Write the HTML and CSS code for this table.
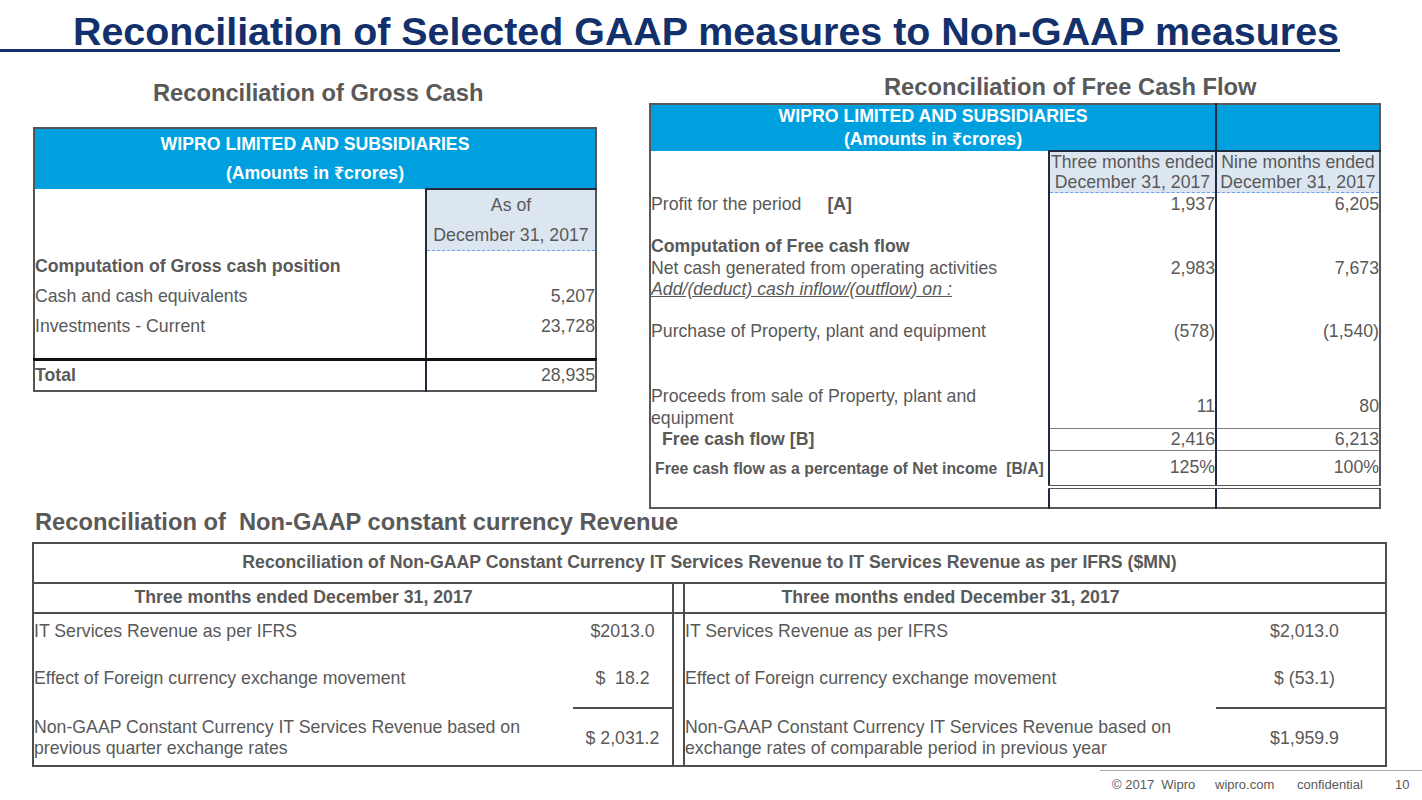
FILE: index.html
```html
<!DOCTYPE html>
<html lang="en">
<head>
<meta charset="utf-8">
<title>Reconciliation of Selected GAAP measures to Non-GAAP measures</title>
<link rel="stylesheet" href="styles.css">
</head>
<body>
<div class="slide">
  <header class="title-bar">
    <h1>Reconciliation of Selected GAAP measures to Non-GAAP measures</h1>
  </header>

  <div class="top-row">
    <section class="col gross">
      <h2 class="sec-head gross-head">Reconciliation of Gross Cash</h2>
      <table class="fin gross-table">
        <colgroup><col class="g-c1"><col class="g-c2"></colgroup>
        <tr class="hd g-hd1"><td colspan="2">WIPRO LIMITED AND SUBSIDIARIES</td></tr>
        <tr class="hd g-hd2"><td colspan="2">(Amounts in ₹crores)</td></tr>
        <tr class="g-colhead"><td></td><td class="v ch">As of<br>December 31, 2017</td></tr>
        <tr class="r31"><td class="b">Computation of Gross cash position</td><td class="v"></td></tr>
        <tr class="r30"><td>Cash and cash equivalents</td><td class="v">5,207</td></tr>
        <tr class="r30"><td>Investments - Current</td><td class="v">23,728</td></tr>
        <tr class="r19"><td></td><td class="v"></td></tr>
        <tr class="r31 total"><td class="b">Total</td><td class="v">28,935</td></tr>
      </table>
    </section>

    <section class="col fcf">
      <h2 class="sec-head fcf-head">Reconciliation of Free Cash Flow</h2>
      <table class="fin fcf-table">
        <colgroup><col class="f-c1"><col class="f-c2"><col class="f-c3"></colgroup>
        <tr class="hd f-hd1"><td colspan="2">WIPRO LIMITED AND SUBSIDIARIES</td><td rowspan="2" class="sep"></td></tr>
        <tr class="hd f-hd2"><td colspan="2">(Amounts in ₹crores)</td></tr>
        <tr class="f-colhead"><td></td><td class="v ch2">Three months ended<br>December 31, 2017</td><td class="v ch2">Nine months ended<br>December 31, 2017</td></tr>
        <tr class="f-r24"><td>Profit for the period<span class="tag">[A]</span></td><td class="v">1,937</td><td class="v">6,205</td></tr>
        <tr class="f-r19"><td></td><td class="v"></td><td class="v"></td></tr>
        <tr class="f-r22"><td class="b">Computation of Free cash flow</td><td class="v"></td><td class="v"></td></tr>
        <tr class="f-r21"><td>Net cash generated from operating activities</td><td class="v">2,983</td><td class="v">7,673</td></tr>
        <tr class="f-r21"><td class="iu">Add/(deduct) cash inflow/(outflow) on :</td><td class="v"></td><td class="v"></td></tr>
        <tr class="f-r19"><td></td><td class="v"></td><td class="v"></td></tr>
        <tr class="f-r26"><td>Purchase of Property, plant and equipment</td><td class="v">(578)</td><td class="v">(1,540)</td></tr>
        <tr class="f-r40"><td></td><td class="v"></td><td class="v"></td></tr>
        <tr class="f-r43"><td class="wrap">Proceeds from sale of Property, plant and<br>equipment</td><td class="v">11</td><td class="v">80</td></tr>
        <tr class="f-r21 fcf-total"><td class="b ind">Free cash flow [B]</td><td class="v">2,416</td><td class="v">6,213</td></tr>
        <tr class="f-r36 pct"><td class="b small">Free cash flow as a percentage of Net income&nbsp; [B/A]</td><td class="v">125%</td><td class="v">100%</td></tr>
        <tr class="f-r21"><td></td><td class="v"></td><td class="v"></td></tr>
      </table>
    </section>
  </div>

  <section class="cc">
    <h2 class="sec-head cc-head">Reconciliation of&nbsp; Non-GAAP constant currency Revenue</h2>
    <table class="cc-table">
      <colgroup><col class="c-l1"><col class="c-v1"><col class="c-sp"><col class="c-l2"><col class="c-v2"></colgroup>
      <tr class="cc-title"><td colspan="5">Reconciliation of Non-GAAP Constant Currency IT Services Revenue to IT Services Revenue as per IFRS ($MN)</td></tr>
      <tr class="cc-hd"><td>Three months ended December 31, 2017</td><td></td><td class="sp"></td><td>Three months ended December 31, 2017</td><td></td></tr>
      <tr class="cc-r1"><td>IT Services Revenue as per IFRS</td><td class="cv">$2013.0</td><td class="sp"></td><td>IT Services Revenue as per IFRS</td><td class="cv cv2">$2,013.0</td></tr>
      <tr class="cc-r2"><td>Effect of Foreign currency exchange movement</td><td class="cv">$&nbsp; 18.2</td><td class="sp"></td><td>Effect of Foreign currency exchange movement</td><td class="cv cv2">$ (53.1)</td></tr>
      <tr class="cc-r3"><td>Non-GAAP Constant Currency IT Services Revenue based on<br>previous quarter exchange rates</td><td class="cv tot">$ 2,031.2</td><td class="sp"></td><td>Non-GAAP Constant Currency IT Services Revenue based on<br>exchange rates of comparable period in previous year</td><td class="cv cv2 tot">$1,959.9</td></tr>
    </table>
  </section>

  <footer class="foot">
    <span>© 2017&nbsp; Wipro</span>
    <span>wipro.com</span>
    <span>confidential</span>
    <span>10</span>
  </footer>
</div>
</body>
</html>
```

FILE: styles.css
```css
* { box-sizing: border-box; }

body {
  margin: 0;
  background: #ffffff;
  font-family: "Liberation Sans", Arial, "Noto Sans", "DejaVu Sans", sans-serif;
  color: #595959;
}

.slide {
  width: 1422px;
  height: 800px;
  overflow: hidden;
}

/* ---------- title ---------- */
.title-bar {
  width: 1340px;
  padding-top: 14px;
  border-bottom: 3px solid #12306b;
}

.title-bar h1 {
  margin: 0;
  padding-left: 73px;
  font-size: 39.4px;
  line-height: 35px;
  font-weight: bold;
  color: #12306b;
  white-space: nowrap;
}

/* ---------- section headings ---------- */
.sec-head {
  margin: 0;
  font-size: 23.7px;
  line-height: 28px;
  font-weight: bold;
  color: #595959;
  white-space: nowrap;
}

.top-row {
  display: flex;
  align-items: flex-start;
}

.gross {
  margin-left: 33px;
  width: 564px;
}

.fcf {
  margin-left: 52px;
  width: 732px;
}

.gross-head {
  margin-top: 27px;
  margin-bottom: 20px;
  padding-left: 120px;
}

.fcf-head {
  margin-top: 21px;
  margin-bottom: 2px;
  padding-left: 235px;
}

/* ---------- generic table ---------- */
table {
  border-collapse: collapse;
  table-layout: fixed;
}

td {
  padding: 0;
  font-size: 17.7px;
  line-height: 21px;
  color: #595959;
  white-space: nowrap;
  vertical-align: middle;
}

.b { font-weight: bold; }

.hd td {
  background: #00a0df;
  color: #ffffff;
  font-weight: bold;
  text-align: center;
}

.v { text-align: right; }

/* ---------- gross cash table ---------- */
.gross-table {
  width: 562px;
  border: 2px solid #555555;
}

.g-c1 { width: 392px; }
.g-c2 { width: 170px; }

.g-hd1 { height: 31px; }
.g-hd2 { height: 30px; }

.g-colhead { height: 59px; }

.gross-table td.v {
  border-left: 2px solid #1d2b3c;
}

.gross-table td.ch {
  background: #dce6f1;
  border-top: 2px solid #1d2b3c;
  border-bottom: 1px dashed #6d9eeb;
  text-align: center;
  line-height: 30px;
}

.r31 { height: 31px; }
.r30 { height: 30px; }
.r19 { height: 18px; }

.total td {
  border-top: 3px solid #111111;
}

/* ---------- free cash flow table ---------- */
.fcf-table {
  width: 730px;
  border: 2px solid #595959;
}

.f-c1 { width: 399px; }
.f-c2 { width: 167px; }
.f-c3 { width: 164px; }

.f-hd1 { height: 24px; }
.f-hd2 { height: 23px; }

.fcf-table td.sep {
  border-left: 2px solid #1d2b3c;
}

.fcf-table td.v {
  border-left: 2px solid #1d2b3c;
}

.f-colhead { height: 40px; }

.fcf-table td.ch2 {
  background: #dce6f1;
  border-top: 2px solid #1d2b3c;
  border-bottom: 1px dashed #6d9eeb;
  text-align: center;
  line-height: 20px;
}

.f-r19 { height: 19px; }
.f-r21 { height: 21px; }
.f-r22 { height: 22px; }
.f-r24 { height: 24px; }
.f-r26 { height: 26px; }
.f-r36 { height: 36px; }
.f-r40 { height: 40px; }
.f-r43 { height: 43px; }

.tag {
  margin-left: 26px;
  font-weight: bold;
}

.iu {
  font-style: italic;
  text-decoration: underline;
}

.wrap { line-height: 22px; }

.ind { padding-left: 11px; }

.small {
  font-size: 15.8px;
  padding-left: 4px;
}

.fcf-total td.v {
  border-top: 1px solid #7f7f7f;
  border-bottom: 1px solid #7f7f7f;
}

.pct td.v {
  border-bottom: 4px double #555555;
}

/* ---------- constant currency table ---------- */
.cc {
  margin-left: 32px;
  width: 1355px;
}

.cc-head {
  margin-top: -1px;
  padding-left: 3px;
  margin-bottom: 6px;
}

.cc-table {
  width: 1353px;
  border: 2px solid #4d4d4d;
}

.c-l1 { width: 540px; }
.c-v1 { width: 100px; }
.c-sp { width: 11px; }
.c-l2 { width: 532px; }
.c-v2 { width: 170px; }

.cc-title { height: 40px; }

.cc-title td {
  text-align: center;
  font-weight: bold;
  border-bottom: 2px solid #4d4d4d;
}

.cc-hd { height: 30px; }

.cc-hd td {
  text-align: center;
  font-weight: bold;
  border-bottom: 2px solid #4d4d4d;
}

.cc-table td.sp {
  border-left: 2px solid #4d4d4d;
  border-right: 2px solid #4d4d4d;
}

.cc-r1 { height: 37px; }
.cc-r2 { height: 58px; }
.cc-r3 { height: 58px; }

.cc-r3 td { padding-top: 4px; }

.cc-table td.cv { text-align: center; }
.cc-table td.cv2 { padding-left: 8px; }

.cc-table td.tot {
  border-top: 2px solid #4d4d4d;
}

/* ---------- footer ---------- */
.foot {
  margin-left: 1100px;
  margin-top: 3px;
  padding: 6px 0 0 12px;
  border-top: 1px solid #a6a6a6;
  display: grid;
  grid-template-columns: 103px 82px 98px auto;
  font-size: 13px;
  line-height: 15px;
  color: #595959;
}
```
